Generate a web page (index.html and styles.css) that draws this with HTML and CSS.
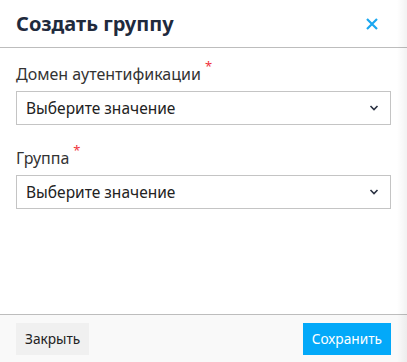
FILE: index.html
```html
<!DOCTYPE html>
<html lang="ru">
<head>
    <meta charset="UTF-8">
    <title>Создать группу</title>
    <link rel="stylesheet" href="styles.css">
</head>
<body>
    <div class="dialog">
        <div class="dialog-header">
            <h2>Создать группу</h2>
            <button class="close-btn" type="button" aria-label="Закрыть">
                <svg width="14" height="14" viewBox="0 0 14 14">
                    <path d="M2 2 L12 12 M12 2 L2 12" stroke="#1aa7f0" stroke-width="2.2" fill="none"/>
                </svg>
            </button>
        </div>
        <div class="dialog-body">
            <div class="field">
                <label>Домен аутентификации<span class="req">*</span></label>
                <div class="select">
                    <span>Выберите значение</span>
                    <svg width="10" height="6" viewBox="0 0 10 6">
                        <path d="M1.5 1 L5 4.5 L8.5 1" stroke="#2a3142" stroke-width="1.6" fill="none"/>
                    </svg>
                </div>
            </div>
            <div class="field">
                <label>Группа<span class="req">*</span></label>
                <div class="select">
                    <span>Выберите значение</span>
                    <svg width="10" height="6" viewBox="0 0 10 6">
                        <path d="M1.5 1 L5 4.5 L8.5 1" stroke="#2a3142" stroke-width="1.6" fill="none"/>
                    </svg>
                </div>
            </div>
        </div>
        <div class="dialog-footer">
            <button class="btn btn-secondary" type="button">Закрыть</button>
            <button class="btn btn-primary" type="button">Сохранить</button>
        </div>
        <div class="edge-shade"></div>
    </div>
</body>
</html>
```

FILE: styles.css
```css
body {
    margin: 0;
    font-family: "Noto Sans", sans-serif;
    background: #fff;
}

.dialog {
    position: relative;
    width: 407px;
    height: 362px;
    display: flex;
    flex-direction: column;
    background: #fff;
    overflow: hidden;
}

.dialog-header {
    height: 47px;
    display: flex;
    align-items: center;
    justify-content: space-between;
    padding: 0 16px;
    border-bottom: 1px solid #bdbdbd;
}

.dialog-header h2 {
    margin: 0;
    font-size: 20px;
    font-weight: 700;
    color: #1f2a3d;
}

.close-btn {
    background: none;
    border: none;
    padding: 0;
    margin-right: 12px;
    display: flex;
    cursor: pointer;
}

.dialog-body {
    flex: 1;
    padding: 16px 16px 0;
}

.field {
    margin-bottom: 23px;
}

.field label {
    display: block;
    font-size: 16px;
    color: #333;
    line-height: 20px;
    margin-bottom: 7px;
}

.req {
    color: #f0323c;
    font-size: 13px;
    line-height: 0;
    vertical-align: 9px;
    margin-left: 4px;
}

.select {
    height: 32px;
    border: 1px solid #c4c4c4;
    display: flex;
    align-items: center;
    justify-content: space-between;
    padding: 0 11px 0 9px;
    font-size: 15.5px;
    color: #222;
}

.dialog-footer {
    height: 47px;
    border-top: 1px solid #bdbdbd;
    background: #f9f9f9;
    display: flex;
    align-items: center;
    justify-content: space-between;
    padding: 0 16px;
}

.btn {
    height: 32px;
    border: none;
    font-family: "Noto Sans", sans-serif;
    font-size: 13.7px;
    padding: 0 9px;
    cursor: pointer;
}

.btn-secondary {
    background: #f0f0f0;
    color: #222;
}

.btn-primary {
    background: #03a9f9;
    color: #fff;
}

.edge-shade {
    position: absolute;
    top: 0;
    right: 0;
    width: 10px;
    height: 100%;
    background: linear-gradient(to right, rgba(0,0,0,0), rgba(0,0,0,0.05));
    pointer-events: none;
}
```
